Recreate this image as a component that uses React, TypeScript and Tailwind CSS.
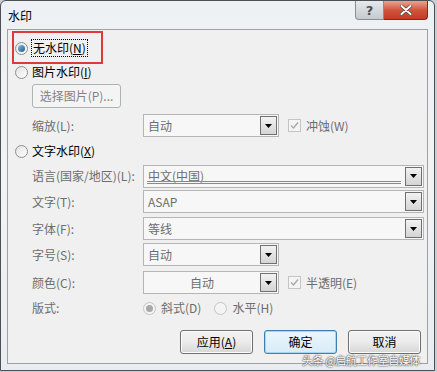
import React from "react";

const font = { fontFamily: '"Noto Sans CJK SC", "Noto Sans", sans-serif' };

function Radio({ checked = false, disabled = false }: { checked?: boolean; disabled?: boolean }) {
  return (
    <span
      className={
        "relative flex h-[13px] w-[13px] shrink-0 items-center justify-center rounded-full border " +
        (disabled ? "border-[#c4c4c4] bg-[#f4f4f4]" : "border-[#8e8f8f] bg-gradient-to-br from-[#e2e2e2] to-[#ffffff]")
      }
    >
      {checked && (
        <span
          className={
            "h-[7px] w-[7px] rounded-full " +
            (disabled ? "bg-[#a8a8a8]" : "bg-gradient-to-br from-[#7fc0e6] to-[#1a5c8c]")
          }
        />
      )}
    </span>
  );
}

function Check() {
  return (
    <span className="flex h-[13px] w-[13px] shrink-0 items-center justify-center border border-[#c4c4c4] bg-[#f4f4f4]">
      <svg width="9" height="9" viewBox="0 0 9 9">
        <path d="M1 4.5 L3.5 7 L8 1.5" fill="none" stroke="#a9a9a9" strokeWidth="1.4" />
      </svg>
    </span>
  );
}

function Drop({
  text,
  wide = false,
  center = false,
  underline = false,
}: {
  text: string;
  wide?: boolean;
  center?: boolean;
  underline?: boolean;
}) {
  return (
    <div
      className={
        "flex h-[23px] items-center border border-[#b5b5b5] bg-[#f7f7f7] pr-[1px] " +
        (wide ? "w-[281px]" : "w-[136px]")
      }
    >
      <div
        className={
          "relative flex h-full flex-1 items-center px-[4px] text-[12px] text-[#6d6d6d] " +
          (center ? "justify-center" : "")
        }
      >
        <span className="leading-none">{text}</span>
        {underline && (
          <span className="absolute bottom-[3px] left-[3px] right-[4px] h-[3px] border-y border-[#8a8a8a]" />
        )}
      </div>
      <div className="flex h-[19px] w-[17px] items-center justify-center border border-[#707070] bg-gradient-to-b from-[#f2f2f2] to-[#d4d4d4]">
        <svg width="7" height="4" viewBox="0 0 7 4">
          <path d="M0 0 H7 L3.5 4 Z" fill="#000" />
        </svg>
      </div>
    </div>
  );
}

function Row({ label, children, h }: { label: string; children: React.ReactNode; h: string }) {
  return (
    <div className={"flex items-center pl-[24px] " + h}>
      <span className="w-[111px] text-[12px] leading-none text-[#6d6d6d]">{label}</span>
      {children}
    </div>
  );
}

function Btn({ children, primary = false }: { children: React.ReactNode; primary?: boolean }) {
  return (
    <div
      className={
        "flex h-[24px] w-[73px] items-center justify-center rounded-[3px] border text-[12px] leading-none text-black " +
        (primary
          ? "border-[#3c7fb1] bg-gradient-to-b from-[#eaf6fd] to-[#d9ecf6] shadow-[inset_0_0_0_1px_#a6d6f2]"
          : "border-[#707070] bg-gradient-to-b from-[#f2f2f2] via-[#ebebeb] to-[#d6d6d6] shadow-[inset_0_0_0_1px_#fcfcfc]")
      }
    >
      {children}
    </div>
  );
}

export default function App() {
  return (
    <div className="relative h-[372px] w-[437px] overflow-hidden bg-[#c9ced4]" style={font}>
      <div className="flex h-[371px] w-[435px] flex-col rounded-t-[6px] border border-[#4d4f52] bg-gradient-to-b from-[#eef1f4] via-[#f1f3f5] to-[#e9edf1] px-[6px] pb-[6px]">
        {/* title bar */}
        <div className="flex h-[28px] shrink-0 items-start justify-between">
          <span className="mt-[9px] pl-[1px] text-[12px] leading-none text-black">水印</span>
          <div className="flex">
            <div className="flex h-[19px] w-[29px] items-center justify-center rounded-bl-[4px] border border-t-0 border-[#8a8d92] bg-gradient-to-b from-[#e6e9ed] to-[#c5cad0] text-[13px] font-bold leading-none text-[#4a4f55]" style={{ fontFamily: '"DejaVu Sans", sans-serif' }}>
              ?
            </div>
            <div className="flex h-[19px] w-[44px] items-center justify-center rounded-br-[4px] border border-l-0 border-t-0 border-[#7a2a1e] bg-gradient-to-b from-[#e8a394] via-[#d0553c] to-[#c23a22]">
              <svg width="12" height="10" viewBox="0 0 12 10">
                <path d="M1.5 1 L10.5 9 M10.5 1 L1.5 9" stroke="#3a3a3a" strokeWidth="3.2" strokeLinecap="round" />
                <path d="M1.5 1 L10.5 9 M10.5 1 L1.5 9" stroke="#ffffff" strokeWidth="2" strokeLinecap="round" />
              </svg>
            </div>
          </div>
        </div>

        {/* panel */}
        <div className="relative flex flex-1 flex-col border border-[#a0a0a0] bg-[#f0f0f0] pt-[6px] text-[12px] text-black">
          {/* radio 1 */}
          <div className="flex h-[24px] items-center gap-[3px] pl-[7px]">
            <Radio checked />
            <span className="border border-dotted border-black px-[1px] py-[2px] leading-none">
              无水印(<span className="underline">N</span>)
            </span>
          </div>
          {/* radio 2 */}
          <div className="flex h-[24px] items-center gap-[4px] pl-[7px]">
            <Radio />
            <span className="leading-none">
              图片水印(<span className="underline">I</span>)
            </span>
          </div>
          {/* select picture button */}
          <div className="flex h-[24px] items-center pl-[24px]">
            <div className="flex h-[24px] w-[89px] items-center justify-center rounded-[3px] border border-[#adb2b5] bg-[#f4f4f4] text-[12px] leading-none text-[#838383]">
              选择图片(P)...
            </div>
          </div>
          <div className="h-[5px]" />
          <Row label="缩放(L):" h="h-[25px]">
            <Drop text="自动" />
            <div className="ml-[9px] flex items-center gap-[5px]">
              <Check />
              <span className="leading-none text-[#6d6d6d]">冲蚀(W)</span>
            </div>
          </Row>
          {/* radio 3 */}
          <div className="flex h-[26px] items-center gap-[4px] pl-[7px]">
            <Radio />
            <span className="leading-none">
              文字水印(<span className="underline">X</span>)
            </span>
          </div>
          <Row label="语言(国家/地区)(L):" h="h-[24px]">
            <Drop text="中文(中国)" wide underline />
          </Row>
          <div className="h-[2px]" />
          <Row label="文字(T):" h="h-[23px]">
            <Drop text="ASAP" wide />
          </Row>
          <div className="h-[4px]" />
          <Row label="字体(F):" h="h-[23px]">
            <Drop text="等线" wide />
          </Row>
          <div className="h-[3px]" />
          <Row label="字号(S):" h="h-[23px]">
            <Drop text="自动" />
          </Row>
          <div className="h-[5px]" />
          <Row label="颜色(C):" h="h-[23px]">
            <Drop text="自动" center />
            <div className="ml-[9px] flex items-center gap-[5px]">
              <Check />
              <span className="leading-none text-[#6d6d6d]">半透明(E)</span>
            </div>
          </Row>
          <Row label="版式:" h="h-[28px]">
            <div className="flex items-center gap-[5px]">
              <Radio checked disabled />
              <span className="leading-none text-[#6d6d6d]">斜式(D)</span>
            </div>
            <div className="ml-[13px] flex items-center gap-[5px]">
              <Radio disabled />
              <span className="leading-none text-[#6d6d6d]">水平(H)</span>
            </div>
          </Row>
          <div className="h-[8px]" />
          <div className="flex justify-end gap-[11px] pr-[6px]">
            <Btn>
              应用(<span className="underline">A</span>)
            </Btn>
            <Btn primary>确定</Btn>
            <Btn>取消</Btn>
          </div>

          {/* red annotation box */}
          <div className="absolute left-[4px] top-[1px] h-[33px] w-[91px] border-2 border-[#dd3b3b]" />
        </div>
      </div>
      {/* watermark */}
      <div
        className="absolute left-[302px] top-[355px] whitespace-nowrap text-[11px] leading-none tracking-[-0.4px] text-white"
        style={{ textShadow: "0 0 2px #333, 0 0 1px #333" }}
      >
        头条 @启航工作室自媒体
      </div>
    </div>
  );
}
